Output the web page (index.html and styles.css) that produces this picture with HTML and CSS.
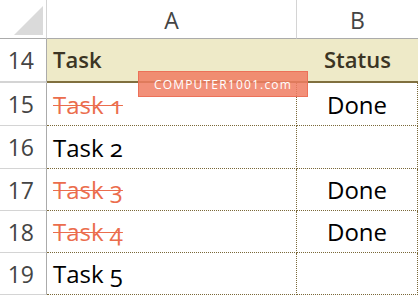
FILE: index.html
```html
<!DOCTYPE html>
<html lang="en">
<head>
    <meta charset="UTF-8">
    <meta name="viewport" content="width=device-width, initial-scale=1.0">
    <title>Task Status</title>
    <link rel="stylesheet" href="styles.css">
</head>
<body>
    <div class="sheet">
        <div class="corner"><span class="corner__triangle"></span></div>
        <div class="col-head">A</div>
        <div class="col-head col-head--last">B</div>

        <div class="row-head row-head--header">14</div>
        <div class="cell cell--title">Task</div>
        <div class="cell cell--title cell--status">Status</div>

        <div class="row-head">15</div>
        <div class="cell cell--done">Task 1</div>
        <div class="cell cell--status">Done</div>

        <div class="row-head">16</div>
        <div class="cell">Task 2</div>
        <div class="cell cell--status"></div>

        <div class="row-head">17</div>
        <div class="cell cell--done">Task 3</div>
        <div class="cell cell--status">Done</div>

        <div class="row-head">18</div>
        <div class="cell cell--done">Task 4</div>
        <div class="cell cell--status">Done</div>

        <div class="row-head">19</div>
        <div class="cell">Task 5</div>
        <div class="cell cell--status"></div>

        <div class="watermark">COMPUTER1001.com</div>
    </div>
</body>
</html>
```

FILE: styles.css
```css
:root {
    --color-grid: #d4d4d4;
    --color-head-line: #ababab;
    --color-head-text: #444;
    --color-title-bg: #eeeac8;
    --color-title-text: #3b3524;
    --color-title-line: #80703f;
    --color-dots: #7a6838;
    --color-done: #eb6d4d;
}

body {
    margin: 0;
    font-family: "Open Sans", "DejaVu Sans", sans-serif;
    background: #fff;
}

.sheet {
    position: relative;
    display: grid;
    grid-template-columns: 47px 250px 121px;
    grid-template-rows: 39px 44px 43px 43px 42px 42px 42px;
    width: 418px;
}

.sheet > div {
    box-sizing: border-box;
}

.corner {
    border-right: 1px solid var(--color-grid);
    border-bottom: 1px solid var(--color-head-line);
    position: relative;
}

.corner__triangle {
    position: absolute;
    left: 14px;
    top: 6px;
    width: 0;
    height: 0;
    border-left: 29px solid transparent;
    border-bottom: 29px solid #dadada;
}

.col-head {
    display: flex;
    align-items: center;
    justify-content: center;
    font-size: 23px;
    color: var(--color-head-text);
    border-right: 1px solid var(--color-grid);
    border-bottom: 1px solid var(--color-head-line);
    padding-top: 2px;
}

.col-head--last {
    border-right: none;
}

.row-head {
    display: flex;
    align-items: center;
    justify-content: flex-end;
    padding-right: 12px;
    font-size: 23px;
    color: var(--color-head-text);
    border-right: 1px solid var(--color-head-line);
    border-bottom: 1px solid var(--color-grid);
}

.row-head--header {
    border-bottom: 2px solid var(--color-grid);
}

.cell {
    display: flex;
    align-items: center;
    padding-left: 6px;
    font-size: 24px;
    color: #000;
    font-variant-numeric: oldstyle-nums;
    border-right: 1px dotted var(--color-dots);
    border-bottom: 1px dotted var(--color-dots);
}

.cell--status {
    justify-content: center;
    padding-left: 0;
}

.cell--title {
    background: var(--color-title-bg);
    color: var(--color-title-text);
    font-weight: 600;
    font-size: 22px;
    border-right: none;
    border-bottom: 2px solid var(--color-title-line);
    padding-bottom: 2px;
}

.cell--done {
    color: var(--color-done);
    text-decoration: line-through;
    text-decoration-thickness: 1px;
}

.watermark {
    position: absolute;
    left: 138px;
    top: 71px;
    width: 170px;
    height: 26px;
    display: flex;
    align-items: center;
    justify-content: center;
    background: rgba(240, 124, 98, 0.85);
    border: 1px solid rgba(235, 110, 85, 0.9);
    color: #fff;
    font-size: 12px;
    letter-spacing: 1.2px;
}
```
